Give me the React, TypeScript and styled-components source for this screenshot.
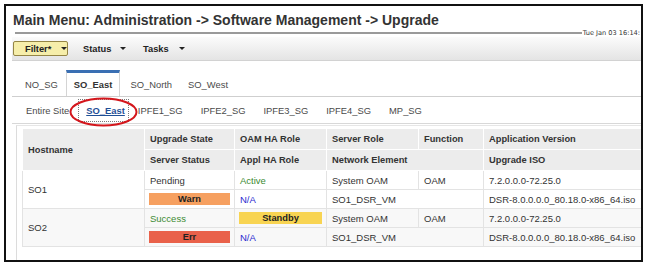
import React from "react";
import styled, {createGlobalStyle} from "styled-components";

const GlobalStyle = createGlobalStyle`
  body {
    margin: 0;
    background: #fff;
    font-family: "Liberation Sans", Arial, sans-serif;
  }
`;

const Frame = styled.div`
  box-sizing: border-box;
  margin: 4px;
  width: 639px;
  height: 258px;
  border: 2px solid #111;
  background: #fff;
  overflow: hidden;
  display: flex;
  flex-direction: column;
`;

const Title = styled.h1`
  margin: 6px 0 0 7px;
  font-size: 14px;
  line-height: 16px;
  font-weight: bold;
  color: #333;
  white-space: nowrap;
`;

const RuleRow = styled.div`
  display: flex;
  align-items: center;
  height: 8px;
  margin: 1px 0 0 9px;
  white-space: nowrap;
`;

const Rule = styled.div`
  flex: 1;
  height: 2px;
  background: #9a9a9a;
`;

const Stamp = styled.span`
  font-family: "DejaVu Sans", Verdana, sans-serif;
  font-size: 6.6px;
  color: #333;
  margin: 0 1px;
`;

const Toolbar = styled.div`
  display: flex;
  align-items: center;
  height: 24px;
  margin-left: 6px;
  padding-left: 1px;
  background: linear-gradient(#fbfbfb, #e4e4e4);
  border-bottom: 1px solid #d2d2d2;
  box-sizing: border-box;
`;

const FilterButton = styled.div`
  box-sizing: border-box;
  display: flex;
  align-items: center;
  width: 55px;
  height: 15px;
  padding-left: 11px;
  background: #f6eeaa;
  border: 1px solid #958646;
  border-radius: 2px;
  font-size: 9.3px;
  font-weight: bold;
  color: #222;
`;

const Menu = styled.div<{ $width: number }>`
  display: flex;
  align-items: center;
  width: ${p => p.$width}px;
  margin-left: 15px;
  font-size: 9.3px;
  font-weight: bold;
  color: #222;
`;

const Caret = styled.span<{ $gap: number }>`
  width: 0;
  height: 0;
  margin-left: ${p => p.$gap}px;
  border-left: 3px solid transparent;
  border-right: 3px solid transparent;
  border-top: 3px solid #222;
`;

const TabRow = styled.div`
  display: flex;
  align-items: stretch;
  height: 27px;
  margin: 9px 0 0 6px;
  padding-left: 5px;
  border-bottom: 1px solid #cfcfcf;
  box-sizing: border-box;
`;

const Tab = styled.div<{ $active?: boolean }>`
  display: flex;
  align-items: center;
  padding: ${p => (p.$active ? "0 7px" : "3px 8px 0")};
  margin-right: ${p => (p.$active ? "2px" : "0")};
  font-size: 9.4px;
  font-weight: ${p => (p.$active ? "bold" : "normal")};
  color: ${p => (p.$active ? "#333" : "#4a4a4a")};
  background: #fff;
  border-top: ${p => (p.$active ? "3px solid #3a6fb3" : "none")};
  border-left: ${p => (p.$active ? "1px solid #d4d4d4" : "none")};
  border-right: ${p => (p.$active ? "1px solid #d4d4d4" : "none")};
`;

const SubTabRow = styled.div`
  position: relative;
  display: flex;
  align-items: center;
  height: 27px;
  margin-left: 6px;
  padding-left: 5px;
  border-bottom: 1px solid #d8d8d8;
  box-sizing: border-box;
`;

const SubTab = styled.div<{ $active?: boolean }>`
  display: flex;
  align-items: center;
  box-sizing: border-box;
  height: 23px;
  padding: ${p => (p.$active ? "0 3px 0 7px" : "0 8px")};
  font-size: 9.4px;
  font-weight: ${p => (p.$active ? "bold" : "normal")};
  color: ${p => (p.$active ? "#1f4f96" : "#4a4a4a")};
  text-decoration: ${p => (p.$active ? "underline" : "none")};
  border: ${p => (p.$active ? "1px dotted #7a7a7a" : "1px solid transparent")};
`;

const Circle = styled.svg`
  position: absolute;
  left: 57px;
  top: 0;
  overflow: visible;
`;

const TableArea = styled.div`
  flex: 1;
  margin: 1px 0 0 10px;
  padding: 2px 0 0 5px;
  border-left: 1px solid #dcdcdc;
  border-top: 1px solid #e6e6e6;
`;

const Table = styled.table`
  border-collapse: collapse;
  table-layout: fixed;
  width: 632px;
  font-size: 9.5px;
  color: #333;
`;

const Head = styled.th`
  height: 20px;
  padding: 0 0 0 5px;
  text-align: left;
  font-weight: bold;
  font-size: 9.3px;
  color: #333;
  background: #ececec;
  border: 1px solid #fff;
  white-space: nowrap;
`;

const Row = styled.tr<{ $shade?: boolean }>`
  height: 19px;
  background: ${p => (p.$shade ? "#f8f8f8" : "#fff")};
`;

const Cell = styled.td<{ $tone?: "green" | "blue" }>`
  padding: 0 0 0 5px;
  border: 1px solid #e3e3e3;
  white-space: nowrap;
  color: ${p => (p.$tone === "green" ? "#3d8a32" : p.$tone === "blue" ? "#2a2ad0" : "#333")};
`;

const BadgeCell = styled.td`
  padding: 0 4px;
  border: 1px solid #e3e3e3;
`;

const Badge = styled.div<{ $bg: string }>`
  height: 12px;
  line-height: 12px;
  text-align: center;
  font-weight: bold;
  font-size: 9.3px;
  color: #222;
  background: ${p => p.$bg};
`;

const servers = [
    {
        host: "SO1",
        state: <Cell>Pending</Cell>,
        oam: <Cell $tone="green">Active</Cell>,
        status: <Badge $bg="#f6a060">Warn</Badge>,
    },
    {
        host: "SO2",
        state: <Cell $tone="green">Success</Cell>,
        oam: <BadgeCell><Badge $bg="#f8d452">Standby</Badge></BadgeCell>,
        status: <Badge $bg="#e9614a">Err</Badge>,
    },
];

export default function App() {
    return (
        <>
            <GlobalStyle/>
            <Frame>
                <Title>Main Menu: Administration -&gt; Software Management -&gt; Upgrade</Title>
                <RuleRow>
                    <Rule/>
                    <Stamp>Tue Jan 03 16:14:</Stamp>
                </RuleRow>
                <Toolbar>
                    <FilterButton>Filter*<Caret $gap={10}/></FilterButton>
                    <Menu $width={45}>Status<Caret $gap={9}/></Menu>
                    <Menu $width={45}>Tasks<Caret $gap={10}/></Menu>
                </Toolbar>
                <TabRow>
                    <Tab>NO_SG</Tab>
                    <Tab $active>SO_East</Tab>
                    <Tab>SO_North</Tab>
                    <Tab>SO_West</Tab>
                </TabRow>
                <SubTabRow>
                    <SubTab>Entire Site</SubTab>
                    <SubTab $active>SO_East</SubTab>
                    <SubTab>IPFE1_SG</SubTab>
                    <SubTab>IPFE2_SG</SubTab>
                    <SubTab>IPFE3_SG</SubTab>
                    <SubTab>IPFE4_SG</SubTab>
                    <SubTab>MP_SG</SubTab>
                    <Circle width="69" height="30" viewBox="0 0 69 30">
                        <ellipse cx="34.5" cy="15" rx="33" ry="13.5" fill="none" stroke="#d4161c" strokeWidth="2"/>
                    </Circle>
                </SubTabRow>
                <TableArea>
                    <Table>
                        <colgroup>
                            <col style={{width: 122}}/>
                            <col style={{width: 90}}/>
                            <col style={{width: 92}}/>
                            <col style={{width: 92}}/>
                            <col style={{width: 65}}/>
                            <col style={{width: 171}}/>
                        </colgroup>
                        <thead>
                        <tr>
                            <Head rowSpan={2}>Hostname</Head>
                            <Head>Upgrade State</Head>
                            <Head>OAM HA Role</Head>
                            <Head>Server Role</Head>
                            <Head>Function</Head>
                            <Head>Application Version</Head>
                        </tr>
                        <tr>
                            <Head>Server Status</Head>
                            <Head>Appl HA Role</Head>
                            <Head colSpan={2}>Network Element</Head>
                            <Head>Upgrade ISO</Head>
                        </tr>
                        </thead>
                        <tbody>
                        {servers.map((s, i) => (
                            <React.Fragment key={s.host}>
                                <Row $shade={i % 2 === 1}>
                                    <Cell rowSpan={2}>{s.host}</Cell>
                                    {s.state}
                                    {s.oam}
                                    <Cell>System OAM</Cell>
                                    <Cell>OAM</Cell>
                                    <Cell>7.2.0.0.0-72.25.0</Cell>
                                </Row>
                                <Row $shade={i % 2 === 1}>
                                    <BadgeCell>{s.status}</BadgeCell>
                                    <Cell $tone="blue">N/A</Cell>
                                    <Cell colSpan={2}>SO1_DSR_VM</Cell>
                                    <Cell>DSR-8.0.0.0.0_80.18.0-x86_64.iso</Cell>
                                </Row>
                            </React.Fragment>
                        ))}
                        </tbody>
                    </Table>
                </TableArea>
            </Frame>
        </>
    );
}
